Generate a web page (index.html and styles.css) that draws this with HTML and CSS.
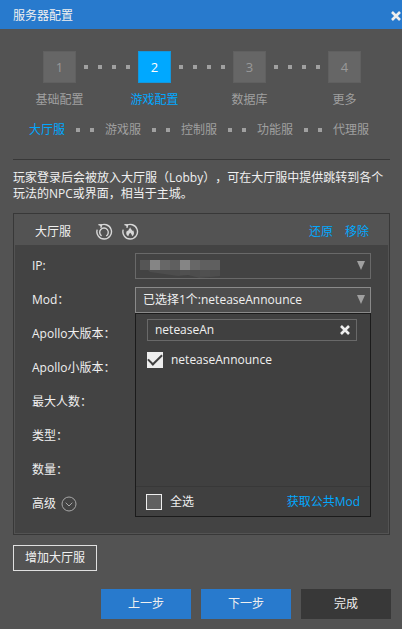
FILE: index.html
```html
<!DOCTYPE html>
<html lang="zh-CN">
<head>
<meta charset="utf-8">
<meta name="viewport" content="width=device-width, initial-scale=1">
<title>服务器配置</title>
<link rel="stylesheet" href="styles.css">
</head>
<body>
<header class="titlebar">
  <h1>服务器配置</h1>
  <button class="close" type="button" aria-label="关闭"><svg class="cross" viewBox="0 0 10 10"><path d="M1 1L9 9M9 1L1 9"/></svg></button>
</header>
<main>
  <ol class="steps">
    <li class="step"><span class="num">1</span><span>基础配置</span></li>
    <li class="dots"><i></i><i></i><i></i><i></i></li>
    <li class="step active"><span class="num">2</span><span>游戏配置</span></li>
    <li class="dots"><i></i><i></i><i></i><i></i></li>
    <li class="step"><span class="num">3</span><span>数据库</span></li>
    <li class="dots"><i></i><i></i><i></i><i></i></li>
    <li class="step"><span class="num">4</span><span>更多</span></li>
  </ol>
  <nav class="subnav">
    <a class="active" href="#lobby">大厅服</a>
    <span class="dots"><i></i><i></i></span>
    <a href="#game">游戏服</a>
    <span class="dots"><i></i><i></i></span>
    <a href="#control">控制服</a>
    <span class="dots"><i></i><i></i></span>
    <a href="#service">功能服</a>
    <span class="dots"><i></i><i></i></span>
    <a href="#proxy">代理服</a>
  </nav>
  <p class="intro">玩家登录后会被放入大厅服（Lobby），可在大厅服中提供跳转到各个玩法的NPC或界面，相当于主城。</p>

  <section class="panel" id="lobby">
    <div class="panel-head">
      <h2>大厅服</h2>
      <button class="icon" type="button" aria-label="重启"><svg viewBox="0 0 18 18"><path d="M4.8 2.9A7.3 7.3 0 1 1 2.2 6.6"/><path d="M3.4 1.6L6.6 1.9L5.9 4.9"/><path d="M6.6 12.9A4.3 4.3 0 1 1 11.2 13"/></svg></button>
      <button class="icon" type="button" aria-label="热更新"><svg viewBox="0 0 18 18"><path d="M4.8 2.9A7.3 7.3 0 1 1 2.2 6.6"/><path d="M3.4 1.6L6.6 1.9L5.9 4.9"/><path class="fill" d="M9.2 4.2C9.5 6 11 6.6 11.3 8L12.1 7.2C13.6 9.5 13.3 12 11 13.3C11.2 11.6 10.2 11 9.2 9.7C8.3 11 7.3 11.6 7.5 13.3C4.8 12 4.8 9.3 6.2 7.4L7 8.2C7.2 6.7 8.7 5.8 9.2 4.2Z"/></svg></button>
      <div class="links"><a href="#restore">还原</a><a href="#remove">移除</a></div>
    </div>
    <div class="panel-body">
      <div class="row">
        <label for="ip">IP:</label>
        <div class="field">
          <select id="ip"><option></option></select>
          <svg class="arrow" viewBox="0 0 8 9"><path d="M0 0H8L4 9Z"/></svg>
          <svg class="mosaic" viewBox="0 0 80 18" aria-hidden="true">
            <path fill="#555" d="M0 0H10V10H0Z"/><path fill="#858585" d="M10 0H20V10H10ZM40 0H50V10H40Z"/><path fill="#676767" d="M20 0H30V10H20ZM50 0H60V10H50Z"/><path fill="#5f5f5f" d="M30 0H40V10H30ZM60 0H80V10H60Z"/>
            <path fill="#4d4d4d" d="M8 10H80V16L60 18L48 15L38 16L24 14L10 12Z"/><path fill="#505050" d="M40 10H50V15H40ZM60 10H70V16H60Z"/>
          </svg>
        </div>
      </div>
      <div class="row">
        <label for="mod">Mod：</label>
        <div class="field">
          <select id="mod" class="open"><option>已选择1个:neteaseAnnounce</option></select>
          <svg class="arrow" viewBox="0 0 8 9"><path d="M0 0H8L4 9Z"/></svg>
          <div class="dropdown">
            <div class="search">
              <input type="text" aria-label="搜索Mod" value="neteaseAn">
              <button type="button" aria-label="清空"><svg class="cross" viewBox="0 0 10 10"><path d="M1 1L9 9M9 1L1 9"/></svg></button>
            </div>
            <label class="option"><input type="checkbox" checked>neteaseAnnounce</label>
            <div class="dropdown-foot">
              <label><input type="checkbox">全选</label>
              <a href="#public">获取公共Mod</a>
            </div>
          </div>
        </div>
      </div>
      <div class="row"><span>Apollo大版本：</span></div>
      <div class="row"><span>Apollo小版本：</span></div>
      <div class="row"><span>最大人数：</span></div>
      <div class="row"><span>类型：</span></div>
      <div class="row"><span>数量：</span></div>
      <div class="row"><button class="advanced" type="button">高级<svg viewBox="0 0 16 16"><circle cx="8" cy="8" r="7"/><path d="M4.7 6.7L8 10L11.3 6.7"/></svg></button></div>
    </div>
  </section>
  <button class="add" type="button">增加大厅服</button>
  <footer class="actions">
    <button type="button">上一步</button>
    <button type="button">下一步</button>
    <button class="done" type="button">完成</button>
  </footer>
</main>
</body>
</html>
```
FILE: styles.css
```css
* { box-sizing: border-box; }
body, h1, h2, p, ol { margin: 0; padding: 0; }
body {
  background: #535353;
  color: #f0f0f0;
  font: 12px/16px "Open Sans", "Noto Sans CJK SC", sans-serif;
  text-spacing-trim: space-all;
}
h1, h2 { font-size: 12px; font-weight: 400; }
button, input, select { font: inherit; color: inherit; border-radius: 0; margin: 0; }
button { background: none; border: 0; padding: 0; }
a { color: #00a8ff; text-decoration: none; }
svg { display: block; fill: none; stroke: #d8d8d8; }
.cross { width: 10px; height: 10px; stroke: #eee; stroke-width: 2.6; }

.titlebar {
  display: flex;
  align-items: center;
  justify-content: space-between;
  height: 29px;
  padding: 3px 1px 0 13px;
  background: #287acd;
}
main { padding: 22px 11px 10px 13px; }

.steps {
  display: flex;
  justify-content: center;
  list-style: none;
  color: #a0a0a0;
}
.step {
  display: flex;
  flex-direction: column;
  align-items: center;
  gap: 9px;
  width: 49px;
}
.num {
  display: grid;
  place-items: center;
  width: 33px;
  height: 32px;
  background: #666;
  border: 1px solid #606060;
  color: #999;
  font-size: 13px;
}
.step.active { color: #00a8ff; }
.active .num { background: #00a8ff; border-color: #1497dc; color: #fff; }
.dots { display: flex; gap: 10px; }
.dots i { width: 4px; height: 4px; background: #a0a0a0; }
.steps .dots { width: 46px; padding-top: 14px; }

.subnav {
  display: flex;
  align-items: center;
  justify-content: center;
  gap: 11px;
  margin-top: 14px;
  padding-right: 6px;
}
.subnav a { color: #a0a0a0; }
.subnav a.active { color: #00a8ff; }

.intro {
  margin: 21px 1px 11px 0;
  padding-top: 10px;
  border-top: 1px solid #383838;
}

.panel {
  margin-right: 1px;
  padding: 1px;
  border: 1px solid #383838;
}
.panel-head {
  display: flex;
  align-items: center;
  height: 30px;
  padding: 4px 19px 0 20px;
}
.panel-head h2 { margin-right: 24px; }
.icon { margin-right: 8px; }
.icon svg { width: 18px; height: 18px; stroke-width: 1.4; }
.icon .fill { fill: #d8d8d8; stroke: none; }
.links { display: flex; gap: 12px; margin-left: auto; }
.panel-body {
  background: #434343;
  padding: 4px 17px 12px;
}
.row { display: flex; align-items: center; height: 34px; }
.row > label, .row > span { width: 103px; white-space: nowrap; }
.field { position: relative; flex: 1; }
.field select {
  display: block;
  appearance: none;
  width: 100%;
  height: 26px;
  padding: 0 24px 0 7px;
  border: 1px solid #696969;
  background: #434343;
  outline: 0;
}
.field select.open { background: #4d4d4d; border-color: #8a8a8a; }
.arrow {
  position: absolute;
  right: 6px;
  top: 8px;
  width: 8px;
  height: 9px;
  fill: #a0a0a0;
  stroke: none;
  pointer-events: none;
}
.mosaic {
  position: absolute;
  left: 5px;
  top: 7px;
  width: 80px;
  height: 18px;
  stroke: none;
  pointer-events: none;
}
.dropdown {
  position: absolute;
  top: 100%;
  left: 0;
  right: 0;
  display: flex;
  flex-direction: column;
  height: 204px;
  padding-top: 5px;
  border: 1px solid #1b1b1b;
  background: #404040;
}
.search {
  display: flex;
  align-items: center;
  height: 22px;
  margin: 0 13px 0 11px;
  padding: 0 6px 0 7px;
  border: 1px solid #696969;
}
.search input {
  flex: 1;
  min-width: 0;
  padding: 0;
  border: 0;
  background: none;
  outline: 0;
}
.dropdown label { display: flex; align-items: center; gap: 8px; }
.option { margin: 11px; }
input[type="checkbox"] {
  appearance: none;
  width: 16px;
  height: 16px;
  border: 1px solid #eee;
  background: #606060;
}
input[type="checkbox"]:checked {
  display: grid;
  place-items: center;
  background: #eee;
}
input[type="checkbox"]:checked::before {
  content: "";
  width: 12px;
  height: 6px;
  border: solid #404040;
  border-width: 0 0 2px 2px;
  transform: translateY(-2px) rotate(-45deg);
}
.dropdown-foot {
  display: flex;
  align-items: center;
  justify-content: space-between;
  height: 30px;
  margin-top: auto;
  padding: 0 10px;
  border-top: 1px solid #383838;
}
.advanced { display: flex; align-items: center; gap: 5px; }
.advanced svg { width: 16px; height: 16px; stroke: #a8a8a8; }

.add {
  display: block;
  width: 84px;
  height: 26px;
  margin-top: 10px;
  border: 1px solid #e0e0e0;
}
.actions {
  display: flex;
  justify-content: flex-end;
  gap: 10px;
  margin-top: 18px;
}
.actions button { width: 90px; height: 30px; background: #287acd; }
.actions .done { background: #383838; }
```
